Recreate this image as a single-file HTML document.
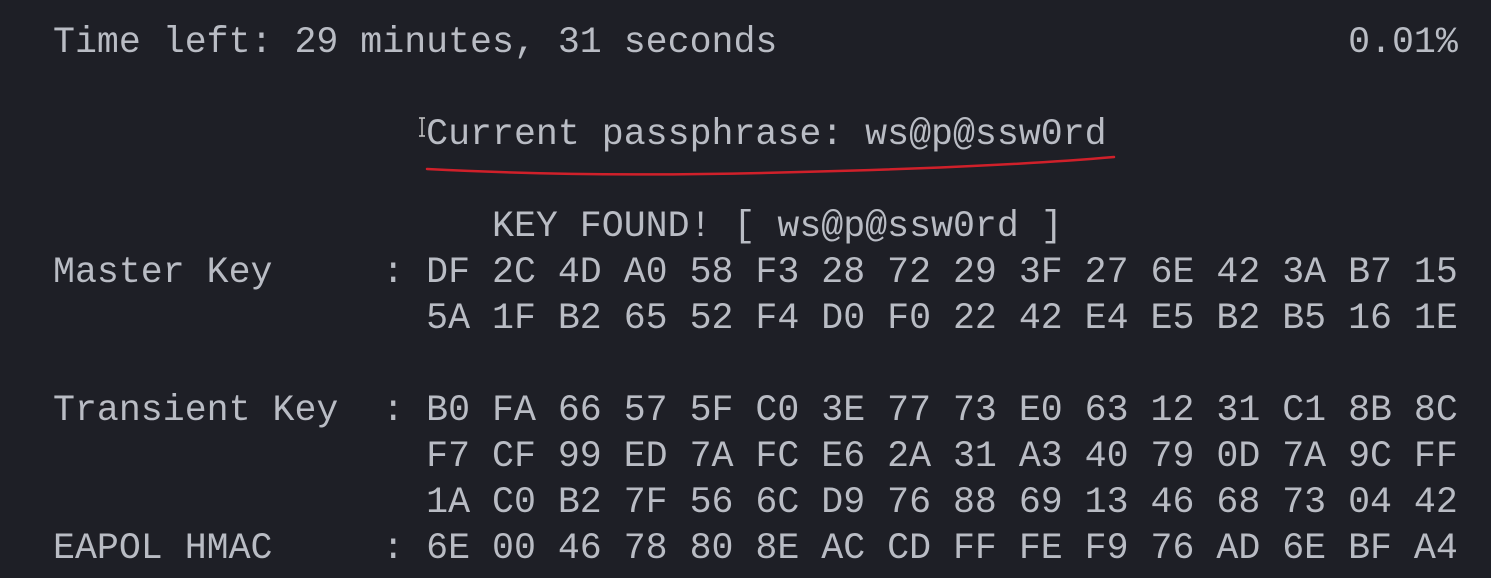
<!DOCTYPE html>
<html><head><meta charset="utf-8"><style>
html,body{margin:0;padding:0;background:#1e1f26;}
body{width:1491px;height:578px;overflow:hidden;position:relative;}
pre{position:absolute;left:53px;top:20px;margin:0;font-family:"Liberation Mono",monospace;font-size:36.6px;line-height:46px;color:#b9bcc4;white-space:pre;}
.cur{position:absolute;left:418px;top:117px;width:8px;height:20px;}
</style></head><body>
<pre>Time left: 29 minutes, 31 seconds                          0.01%

                 Current passphrase: ws@p@ssw0rd

                    KEY FOUND! [ ws@p@ssw0rd ]
Master Key     : DF 2C 4D A0 58 F3 28 72 29 3F 27 6E 42 3A B7 15
                 5A 1F B2 65 52 F4 D0 F0 22 42 E4 E5 B2 B5 16 1E

Transient Key  : B0 FA 66 57 5F C0 3E 77 73 E0 63 12 31 C1 8B 8C
                 F7 CF 99 ED 7A FC E6 2A 31 A3 40 79 0D 7A 9C FF
                 1A C0 B2 7F 56 6C D9 76 88 69 13 46 68 73 04 42
EAPOL HMAC     : 6E 00 46 78 80 8E AC CD FF FE F9 76 AD 6E BF A4</pre>
<svg class="cur" viewBox="0 0 8 20"><path d="M1 1h6M4 1v18M1 19h6" stroke="#c8c8c8" stroke-width="1.5" fill="none"/></svg>
<svg style="position:absolute;left:0;top:0" width="1491" height="578"><path d="M427 169 Q 600 178 800 172 Q 1000 167 1114 157" stroke="#d0202a" stroke-width="2.5" fill="none" stroke-linecap="round"/></svg>
</body></html>
